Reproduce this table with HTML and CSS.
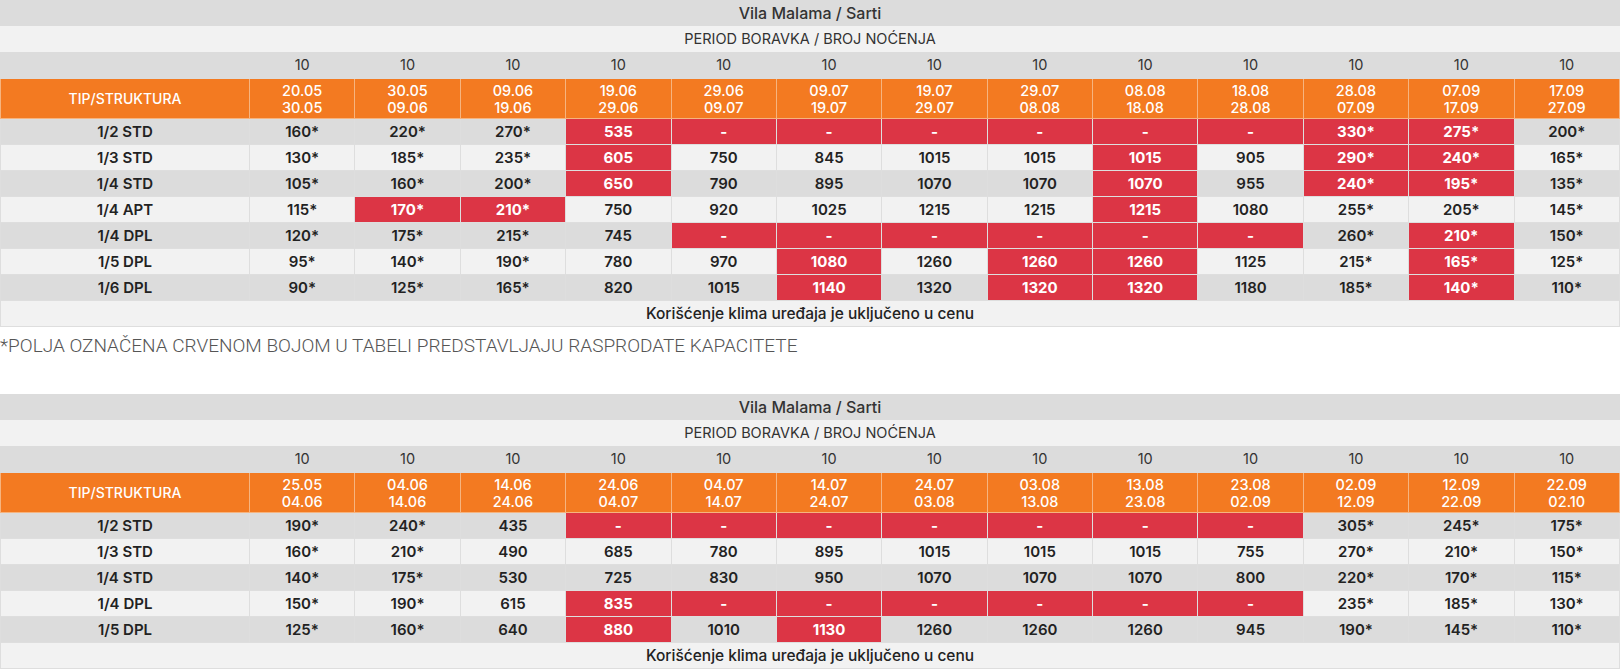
FILE: index.html
```html
<!DOCTYPE html>
<html lang="sr">
<head>
<meta charset="utf-8">
<title>Vila Malama / Sarti</title>
<link rel="stylesheet" href="styles.css">
</head>
<body>
<table class="price">
<colgroup><col class="c-type"><col span="13"></colgroup>
<tr class="t-title"><td colspan="14">Vila Malama / Sarti</td></tr>
<tr class="t-period"><td colspan="14">PERIOD BORAVKA / BROJ NOĆENJA</td></tr>
<tr class="t-nights"><td></td><td>10</td><td>10</td><td>10</td><td>10</td><td>10</td><td>10</td><td>10</td><td>10</td><td>10</td><td>10</td><td>10</td><td>10</td><td>10</td></tr>
<tr class="t-head"><td>TIP/STRUKTURA</td><td>20.05<br>30.05</td><td>30.05<br>09.06</td><td>09.06<br>19.06</td><td>19.06<br>29.06</td><td>29.06<br>09.07</td><td>09.07<br>19.07</td><td>19.07<br>29.07</td><td>29.07<br>08.08</td><td>08.08<br>18.08</td><td>18.08<br>28.08</td><td>28.08<br>07.09</td><td>07.09<br>17.09</td><td>17.09<br>27.09</td></tr>
<tr class="dark"><td>1/2 STD</td><td>160*</td><td>220*</td><td>270*</td><td class="sold">535</td><td class="sold">-</td><td class="sold">-</td><td class="sold">-</td><td class="sold">-</td><td class="sold">-</td><td class="sold">-</td><td class="sold">330*</td><td class="sold">275*</td><td>200*</td></tr>
<tr class="light"><td>1/3 STD</td><td>130*</td><td>185*</td><td>235*</td><td class="sold">605</td><td>750</td><td>845</td><td>1015</td><td>1015</td><td class="sold">1015</td><td>905</td><td class="sold">290*</td><td class="sold">240*</td><td>165*</td></tr>
<tr class="dark"><td>1/4 STD</td><td>105*</td><td>160*</td><td>200*</td><td class="sold">650</td><td>790</td><td>895</td><td>1070</td><td>1070</td><td class="sold">1070</td><td>955</td><td class="sold">240*</td><td class="sold">195*</td><td>135*</td></tr>
<tr class="light"><td>1/4 APT</td><td>115*</td><td class="sold">170*</td><td class="sold">210*</td><td>750</td><td>920</td><td>1025</td><td>1215</td><td>1215</td><td class="sold">1215</td><td>1080</td><td>255*</td><td>205*</td><td>145*</td></tr>
<tr class="dark"><td>1/4 DPL</td><td>120*</td><td>175*</td><td>215*</td><td>745</td><td class="sold">-</td><td class="sold">-</td><td class="sold">-</td><td class="sold">-</td><td class="sold">-</td><td class="sold">-</td><td>260*</td><td class="sold">210*</td><td>150*</td></tr>
<tr class="light"><td>1/5 DPL</td><td>95*</td><td>140*</td><td>190*</td><td>780</td><td>970</td><td class="sold">1080</td><td>1260</td><td class="sold">1260</td><td class="sold">1260</td><td>1125</td><td>215*</td><td class="sold">165*</td><td>125*</td></tr>
<tr class="dark"><td>1/6 DPL</td><td>90*</td><td>125*</td><td>165*</td><td>820</td><td>1015</td><td class="sold">1140</td><td>1320</td><td class="sold">1320</td><td class="sold">1320</td><td>1180</td><td>185*</td><td class="sold">140*</td><td>110*</td></tr>
<tr class="t-foot"><td colspan="14">Korišćenje klima uređaja je uključeno u cenu</td></tr>
</table>

<p class="note">*POLJA OZNAČENA CRVENOM BOJOM U TABELI PREDSTAVLJAJU RASPRODATE KAPACITETE</p>

<table class="price">
<colgroup><col class="c-type"><col span="13"></colgroup>
<tr class="t-title"><td colspan="14">Vila Malama / Sarti</td></tr>
<tr class="t-period"><td colspan="14">PERIOD BORAVKA / BROJ NOĆENJA</td></tr>
<tr class="t-nights"><td></td><td>10</td><td>10</td><td>10</td><td>10</td><td>10</td><td>10</td><td>10</td><td>10</td><td>10</td><td>10</td><td>10</td><td>10</td><td>10</td></tr>
<tr class="t-head"><td>TIP/STRUKTURA</td><td>25.05<br>04.06</td><td>04.06<br>14.06</td><td>14.06<br>24.06</td><td>24.06<br>04.07</td><td>04.07<br>14.07</td><td>14.07<br>24.07</td><td>24.07<br>03.08</td><td>03.08<br>13.08</td><td>13.08<br>23.08</td><td>23.08<br>02.09</td><td>02.09<br>12.09</td><td>12.09<br>22.09</td><td>22.09<br>02.10</td></tr>
<tr class="dark"><td>1/2 STD</td><td>190*</td><td>240*</td><td>435</td><td class="sold">-</td><td class="sold">-</td><td class="sold">-</td><td class="sold">-</td><td class="sold">-</td><td class="sold">-</td><td class="sold">-</td><td>305*</td><td>245*</td><td>175*</td></tr>
<tr class="light"><td>1/3 STD</td><td>160*</td><td>210*</td><td>490</td><td>685</td><td>780</td><td>895</td><td>1015</td><td>1015</td><td>1015</td><td>755</td><td>270*</td><td>210*</td><td>150*</td></tr>
<tr class="dark"><td>1/4 STD</td><td>140*</td><td>175*</td><td>530</td><td>725</td><td>830</td><td>950</td><td>1070</td><td>1070</td><td>1070</td><td>800</td><td>220*</td><td>170*</td><td>115*</td></tr>
<tr class="light"><td>1/4 DPL</td><td>150*</td><td>190*</td><td>615</td><td class="sold">835</td><td class="sold">-</td><td class="sold">-</td><td class="sold">-</td><td class="sold">-</td><td class="sold">-</td><td class="sold">-</td><td>235*</td><td>185*</td><td>130*</td></tr>
<tr class="dark"><td>1/5 DPL</td><td>125*</td><td>160*</td><td>640</td><td class="sold">880</td><td>1010</td><td class="sold">1130</td><td>1260</td><td>1260</td><td>1260</td><td>945</td><td>190*</td><td>145*</td><td>110*</td></tr>
<tr class="t-foot"><td colspan="14">Korišćenje klima uređaja je uključeno u cenu</td></tr>
</table>
</body>
</html>
```

FILE: styles.css
```css
html, body {
  margin: 0;
  padding: 0;
  background: #ffffff;
}

body {
  font-family: Inter, "Open Sans", "Liberation Sans", sans-serif;
  color: #2b2b2b;
}

.price {
  width: 100%;
  border-collapse: collapse;
  table-layout: fixed;
}

.price .c-type {
  width: 249px;
}

.price td {
  border: 1px solid #dedede;
  padding: 0;
  height: 25px;
  text-align: center;
  vertical-align: middle;
  font-size: 15px;
  line-height: 16px;
  font-weight: 600;
  color: #222;
}

.t-title td {
  background: #dcdcdc;
  border-color: #dcdcdc;
  font-size: 16px;
  font-weight: 500;
  color: #333;
  border-top: 0;
}

.t-period td {
  background: #f2f2f2;
  border-color: #f2f2f2;
  font-size: 14.5px;
  font-weight: 400;
  color: #333;
}

.t-nights td {
  background: #dcdcdc;
  border-color: #dcdcdc;
  font-size: 14.5px;
  font-weight: 400;
  color: #333;
  height: 26px;
}

.t-head td {
  background: #f37a21;
  border-color: #f6b47f;
  color: #ffffff;
  font-size: 14.5px;
  font-weight: 500;
  height: 39px;
  line-height: 17px;
}

.t-head td:first-child {
  font-size: 14px;
}

.dark td {
  background: #dcdcdc;
}

.light td {
  background: #f2f2f2;
}

.price td.sold {
  background: #dc3545;
  color: #ffffff;
  font-weight: 700;
}

.t-foot td {
  background: #f2f2f2;
  font-size: 15.5px;
  font-weight: 500;
  color: #222;
}

.note {
  margin: 6px 0 35px;
  font-family: Roboto, "Liberation Sans", sans-serif;
  font-weight: 300;
  font-size: 19px;
  line-height: 26px;
  color: #555;
}
```
